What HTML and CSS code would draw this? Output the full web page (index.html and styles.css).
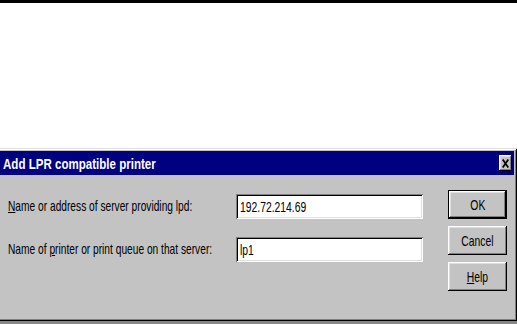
FILE: index.html
```html
<!DOCTYPE html>
<html lang="en">
<head>
  <meta charset="UTF-8">
  <title>Add LPR compatible printer</title>
  <link rel="stylesheet" href="styles.css">
</head>
<body>
  <div class="rule"></div>

  <div class="dialog">
    <div class="titlebar">
      <span class="title">Add LPR compatible printer</span>
      <span class="close">
        <svg width="7" height="9" viewBox="0 0 7 9">
          <path d="M0.7 0.5 L6.3 8.5 M6.3 0.5 L0.7 8.5" stroke="#000" stroke-width="1.8" fill="none"/>
        </svg>
      </span>
    </div>

    <div class="content">
      <div class="fields">
        <label class="label"><span class="txt"><u>N</u>ame or address of server providing lpd:</span></label>
        <div class="field"><span class="txt">192.72.214.69</span></div>

        <label class="label"><span class="txt">Name of <u>p</u>rinter or print queue on that server:</span></label>
        <div class="field"><span class="txt">lp1</span></div>
      </div>

      <div class="buttons">
        <button class="btn default"><span class="txt">OK</span></button>
        <button class="btn"><span class="txt">Cancel</span></button>
        <button class="btn"><span class="txt"><u>H</u>elp</span></button>
      </div>
    </div>
  </div>
</body>
</html>
```

FILE: styles.css
```css
body {
  margin: 0;
  background: #fff;
  font-family: "Liberation Sans", Arial, sans-serif;
  font-size: 15px;
  color: #000;
  overflow: hidden;
}
.rule {
  height: 3px;
  background: #000;
}
.dialog {
  margin: 145px 0 0 -4px;
  width: 521px;
  height: 176px;
  box-sizing: border-box;
  padding: 3px;
  background: #c3c3c3;
  border-bottom: 3px solid #868686;
  box-shadow: inset 1px 1px #dfdfdf, inset -1px -1px #000,
              inset 2px 2px #fff, inset -2px -2px #808080;
}
.titlebar {
  height: 24px;
  background: #000080;
  display: flex;
  align-items: center;
  justify-content: space-between;
  padding: 0 2px 0 4px;
}
.title {
  color: #fff;
  font-weight: bold;
  display: inline-block;
  white-space: nowrap;
  transform: scaleX(0.77);
  transform-origin: left center;
}
.close {
  width: 13px;
  height: 16px;
  background: #c3c3c3;
  display: flex;
  align-items: center;
  justify-content: center;
  box-shadow: inset -1px -1px #000, inset 1px 1px #fff,
              inset -2px -2px #808080, inset 2px 2px #dfdfdf;
}
.content {
  display: flex;
  padding: 15px 7px 0 9px;
}
.fields {
  display: grid;
  grid-template-columns: 228px 187px;
  grid-auto-rows: 25px;
  row-gap: 18px;
  align-items: center;
  margin: 4px 25px 0 0;
}
.txt {
  display: inline-block;
  white-space: nowrap;
  transform: scaleX(0.69);
  transform-origin: left center;
}
.label {
  min-width: 0;
  margin-bottom: 3px;
}
.label .txt {
  transform: scaleX(0.68);
}
.field {
  height: 25px;
  box-sizing: border-box;
  padding-left: 4px;
  display: flex;
  align-items: center;
  background: #fff;
  box-shadow: inset 1px 1px #808080, inset -1px -1px #fff,
              inset 2px 2px #000, inset -2px -2px #dfdfdf;
}
.buttons {
  display: flex;
  flex-direction: column;
  gap: 7px;
  width: 59px;
}
.btn {
  height: 29px;
  padding: 0;
  border: none;
  font: inherit;
  color: #000;
  background: #c3c3c3;
  box-shadow: inset -1px -1px #000, inset 1px 1px #fff,
              inset -2px -2px #808080, inset 2px 2px #dfdfdf;
}
.btn .txt {
  transform-origin: center;
}
.btn.default {
  box-shadow: inset 0 0 0 1px #000, inset -2px -2px #000, inset 2px 2px #fff,
              inset -3px -3px #808080, inset 3px 3px #dfdfdf;
}
```
